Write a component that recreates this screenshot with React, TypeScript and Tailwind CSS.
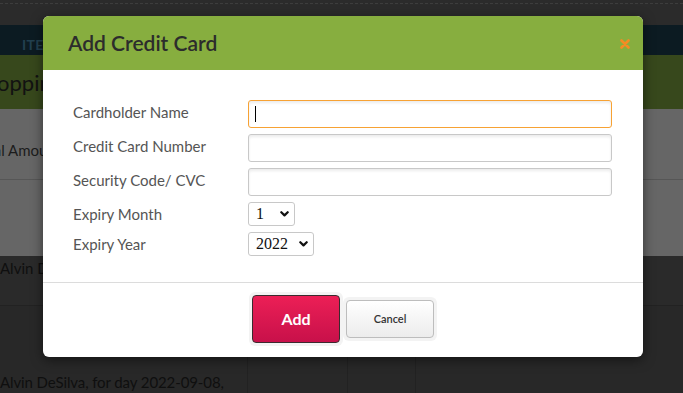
import React from "react";

const sans = { fontFamily: "Lato, 'Open Sans', sans-serif" };

function Chevron() {
  return (
    <svg width="9" height="6" viewBox="0 0 9 6" className="pointer-events-none absolute right-[6px] top-1/2 -translate-y-1/2">
      <path d="M1.3 1.2 L4.5 4.4 L7.7 1.2" fill="none" stroke="#111" strokeWidth="2.2" strokeLinecap="round" strokeLinejoin="round" />
    </svg>
  );
}

function Field({ focused }: { focused?: boolean }) {
  return (
    <div className="relative">
      <input
        readOnly
        className={`block h-[28px] w-[364px] rounded-[3px] border bg-white shadow-[inset_0_2px_3px_rgba(0,0,0,0.08)] outline-none ${
          focused ? "border-[#f7a234]" : "border-[#c8c8c8]"
        }`}
      />
      {focused && <span className="absolute left-[7px] top-[6px] h-[16px] w-[1px] bg-black" />}
    </div>
  );
}

function Select({ value, width }: { value: string; width: string }) {
  return (
    <div className={`relative ${width}`}>
      <select
        defaultValue={value}
        className="block h-[24px] w-full appearance-none rounded-[3px] border border-[#c8c8c8] bg-white pl-[7px] text-[16px] leading-none text-[#111] outline-none"
        style={{ fontFamily: "'Liberation Serif', serif" }}
      >
        <option>{value}</option>
      </select>
      <Chevron />
    </div>
  );
}

export default function App() {
  const rows: { label: string; el: React.ReactNode; sel?: boolean }[] = [
    { label: "Cardholder Name", el: <Field focused /> },
    { label: "Credit Card Number", el: <Field /> },
    { label: "Security Code/ CVC", el: <Field /> },
    { label: "Expiry Month", el: <Select value="1" width="w-[47px]" />, sel: true },
    { label: "Expiry Year", el: <Select value="2022" width="w-[66px]" />, sel: true },
  ];
  return (
    <div className="relative h-[393px] w-[683px] overflow-hidden bg-[#292929]" style={sans}>
      {/* background page (dimmed) */}
      <div className="flex h-full flex-col">
        <div className="h-[25px] bg-[#2b2b2b] pt-[3px]">
          <div className="border-t border-dashed border-[#3d3d3d]" />
        </div>
        <div className="flex h-[30px] items-center bg-[#0c1b22] pl-[22px]">
          <span className="pt-[8px] text-[14px] font-bold tracking-wide text-[#22404f]">ITEMS</span>
        </div>
        <div className="flex h-[54px] items-center overflow-hidden bg-[#37481c]">
          <span className="ml-[-27px] whitespace-nowrap text-[22px] text-[#121212]">Shopping Cart</span>
        </div>
        <div className="flex h-[147px] flex-col bg-[#666666]">
          <div className="flex h-[71px] items-center overflow-hidden border-b border-[#565656]">
            <span className="ml-[-27px] whitespace-nowrap pt-[12px] text-[15px] text-[#1c1c1c]">Total Amount</span>
          </div>
        </div>
        <div className="flex h-[50px] border-b border-[#222] bg-[#2a2a2a]">
          <span className="whitespace-nowrap pt-[1px] text-[15px] text-[#0f0f0f]">Alvin DeSilva</span>
        </div>
        <div className="flex flex-1 bg-[#282828]">
          <div className="flex w-[248px] items-end border-r border-[#222]">
            <span className="whitespace-nowrap text-[15px] tracking-[-0.1px] text-[#0f0f0f]">Alvin DeSilva, for day 2022-09-08,</span>
          </div>
          <div className="w-[100px] border-r border-[#222]" />
          <div className="w-[68px] border-r border-[#222]" />
        </div>
      </div>

      {/* modal */}
      <div className="absolute left-[43px] top-[16px] w-[600px] overflow-hidden rounded-[6px] bg-white shadow-[0_3px_12px_rgba(0,0,0,0.5)]">
        <div className="flex h-[54px] items-center justify-between bg-[#87ae3f] pl-[25px] pr-[13px]">
          <h2 className="text-[21px] font-semibold text-[#2c2c2c]">Add Credit Card</h2>
          <svg width="10" height="10" viewBox="0 0 10 10" className="mt-[2px]">
            <path d="M1.5 1.5 L8.5 8.5 M8.5 1.5 L1.5 8.5" stroke="#f68b23" strokeWidth="2.6" strokeLinecap="round" />
          </svg>
        </div>
        <div className="flex flex-col gap-[6px] pb-[26px] pl-[30px] pt-[30px]">
          {rows.map((r) => (
            <div key={r.label} className="flex items-center">
              <label
                className={`w-[175px] text-[15px] leading-[18px] text-[#555] ${r.sel ? "mb-[0px]" : "mb-[4px]"}`}
              >
                {r.label}
              </label>
              {r.el}
            </div>
          ))}
        </div>
        <div className="flex items-center justify-center border-t border-[#dcdcdc] pb-[11px] pt-[9px]">
          <div className="rounded-[6px] bg-[#f3f3f3] p-[3px]">
            <button className="flex h-[48px] w-[88px] items-center justify-center rounded-[4px] border border-[#3b2a2e] bg-gradient-to-b from-[#ec1f56] to-[#c8104a] text-[16px] font-bold text-white">
              Add
            </button>
          </div>
          <div className="rounded-[6px] bg-[#f3f3f3] p-[3px]">
            <button className="flex h-[38px] w-[88px] items-center justify-center rounded-[4px] border border-[#bdbdbd] bg-gradient-to-b from-white to-[#ececec] text-[11px] font-semibold text-[#333]">
              Cancel
            </button>
          </div>
        </div>
      </div>
    </div>
  );
}
